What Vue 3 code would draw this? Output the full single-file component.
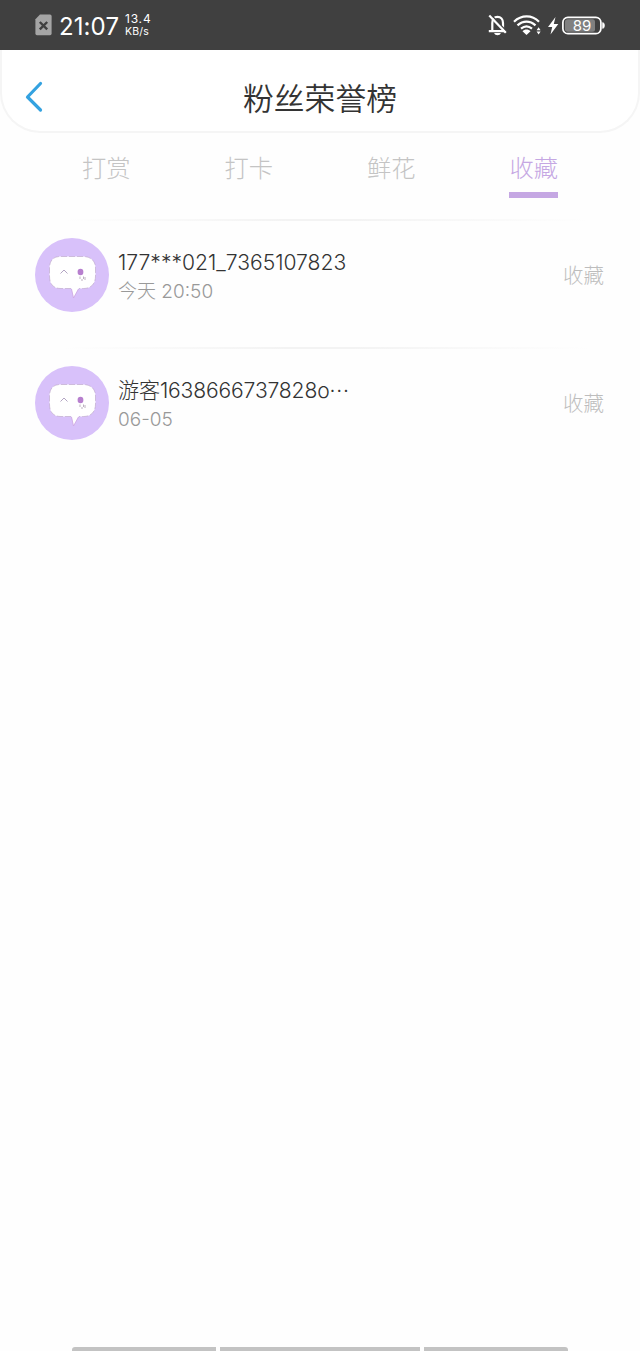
<template>
  <div class="page">
    <div class="status-bar">
      <svg class="sim" width="17" height="22" viewBox="0 0 17 22">
        <path d="M5 0.5H15a1.6 1.6 0 0 1 1.6 1.6V19.6A1.6 1.6 0 0 1 15 21.2H2A1.6 1.6 0 0 1 .4 19.6V5.2Z" fill="#a5a5a5" />
        <path d="M4.8 8l7.4 7.4M12.2 8l-7.4 7.4" stroke="#404040" stroke-width="2.4" />
      </svg>
      <span class="clock">21:07</span>
      <div class="speed">
        <span class="rate">13.4</span>
        <span class="unit">KB/s</span>
      </div>
      <svg class="system" width="120" height="24" viewBox="0 0 120 24">
        <g fill="none" stroke="#fff" stroke-width="2">
          <path d="M4.3 18V10c0-3.7 2-6.200 5.200-6.200s5.500 2.500 5.500 6.200v8M.8 18.200h17.400" stroke-width="2.200" />
          <path d="M3 1.800l16 17" stroke="#404040" stroke-width="1.400" />
          <path d="M1.300 2.500l16.500 17.200" stroke-width="2.200" />
          <path d="M26 8.700c7.500-7 18-7 25 0M29.500 12.400c5.500-5 12.500-5 18 0M33 15.700c3.500-3 7.500-3 11 0" stroke-width="2.200" />
          <rect x="74.900" y="4.300" width="38" height="16.400" rx="5" stroke-width="1.700" />
        </g>
        <path d="M6.200 20h6.600c-.7 3-5.900 3-6.600 0Z" fill="#fff" />
        <path d="M34.500 18.200c2-2.300 6-2.300 8 0l-4 3.700Z" fill="#fff" />
        <path d="M48.600 17.200l2-3 2 3ZM48.600 18.600l2 3 2-3Z" fill="#fff" />
        <path d="M67.500 4L60 14h4.200l-1.700 7.500L70.300 11h-4.500Z" fill="#fff" />
        <rect x="77" y="6.300" width="30" height="12.400" rx="2.500" fill="#808080" />
        <path d="M114.800 9.500c2 1 2 5 0 6Z" fill="#fff" stroke="#fff" />
        <text x="94" y="17.600" text-anchor="middle" class="battery">89</text>
      </svg>
    </div>

    <header class="header">
      <svg class="back" width="20" height="32" viewBox="0 0 20 32">
        <path d="M16.500 2.500L3.500 16l13 13" fill="none" stroke="#34a2e0" stroke-width="3.200" stroke-linecap="round" stroke-linejoin="round" />
      </svg>
      <h1 class="title">粉丝荣誉榜</h1>
    </header>

    <nav class="tabs">
      <div
        class="tab"
        :class="{ active: tab === current }"
        v-for="tab in tabs"
        :key="tab"
        @click="current = tab"
      >
        <span class="tab-label">{{ tab }}</span>
      </div>
    </nav>

    <ul class="fans">
      <li class="fan" v-for="fan in fans" :key="fan.name">
        <svg class="avatar" width="74" height="74" viewBox="0 0 74 74">
          <circle cx="37" cy="37" r="37" fill="#d8c1fa" />
          <path
            d="M25 18.500H48C56 18.500 60.500 23 60.500 30V38C60.500 46 56 50.500 48.500 50.500H43.500L38.500 60L36.500 50.500H26C18 50.500 14.500 46 14.500 38V30C14.500 23 18 18.500 25 18.500Z"
            fill="#fff"
          />
          <path
            d="M36 50.500H26C18 50.500 14.500 46 14.500 38V30C14.500 23 18 18.500 25 18.500H48C56 18.500 60.500 23 60.500 30V38C60.500 46 56 50.500 48.500 50.500H44"
            fill="none"
            stroke="#b9a2c4"
            stroke-width=".6"
            stroke-dasharray="6 2"
          />
          <path d="M36.500 51l2 9 5-9" fill="none" stroke="#cda6df" stroke-width=".8" />
          <path d="M25.500 35.500l3.500-3.500 3.500 3.500" fill="none" stroke="#b3a5c3" />
          <ellipse cx="45.500" cy="34" rx="2.900" ry="3.300" fill="#b77fce" />
          <path d="M45 38.500v2.500M48.500 38.500v2.500M46 42h2M50 39v3" stroke="#b5a9b9" stroke-width=".9" />
        </svg>
        <div class="info">
          <div class="name">{{ fan.name }}<span class="more" v-if="fan.cut">···</span></div>
          <div class="time">{{ fan.time }}</div>
        </div>
        <span class="action">收藏</span>
      </li>
    </ul>

    <div class="nav-hints">
      <i class="hint side"></i>
      <i class="hint"></i>
      <i class="hint side"></i>
    </div>
  </div>
</template>

<script setup>
import { ref } from "vue";

const tabs = ["打赏", "打卡", "鲜花", "收藏"];
const current = ref("收藏");

const fans = [
  { name: "177***021_7365107823", time: "今天 20:50" },
  { name: "游客1638666737828o", time: "06-05", cut: true },
];
</script>

<style>
body {
  margin: 0;
  background: #fefefe;
}
</style>

<style scoped>
.page {
  height: 1351px;
  display: flex;
  flex-direction: column;
  overflow: hidden;
  font-family: Inter, "Noto Sans CJK SC", sans-serif;
  font-weight: 300;
  background: #fefefe;
}

.status-bar {
  box-sizing: border-box;
  height: 50px;
  flex: none;
  display: flex;
  align-items: center;
  padding: 0 32px 0 35px;
  color: #fff;
  background: #404040;
}

.clock {
  margin-left: 7px;
  width: 60px;
  font-size: 24px;
  font-weight: 400;
  line-height: 30px;
  letter-spacing: 0.1px;
  padding-top: 3px;
}

.speed {
  display: flex;
  flex-direction: column;
  margin-left: 6px;
  padding-top: 1px;
  font-weight: 400;
}

.rate {
  font-size: 12px;
  line-height: 12px;
  letter-spacing: 0.8px;
}

.unit {
  font-size: 10.5px;
  line-height: 13px;
  letter-spacing: 0.2px;
}

.system {
  margin-left: auto;
}

.battery {
  font-size: 15px;
  font-weight: 400;
  fill: #fff;
}

.header {
  box-sizing: border-box;
  height: 83px;
  flex: none;
  display: flex;
  align-items: center;
  padding: 12px 22px 0;
  border: 2px solid #f5f5f5;
  border-top: 0;
  border-radius: 0 0 40px 40px;
  background: #fff;
}

.title {
  flex: 1;
  margin: 0 20px 0 0;
  padding-top: 5px;
  font-size: 30.8px;
  font-weight: 350;
  line-height: 40px;
  text-align: center;
  color: #333;
}

.tabs {
  display: grid;
  grid-template-columns: repeat(4, 1fr);
  height: 86px;
  flex: none;
  padding: 0 35px;
}

.tab {
  display: flex;
  justify-content: center;
  align-items: flex-start;
  padding-top: 17px;
  color: #c4c4c4;
  cursor: pointer;
}

.tab-label {
  box-sizing: border-box;
  height: 48px;
  padding-top: 1px;
  font-size: 24.3px;
  line-height: 35px;
  border-bottom: 6px solid transparent;
}

.active {
  color: #c5a7e3;
}

.active .tab-label {
  border-color: #c5a7e3;
}

.fans {
  flex: 1;
  margin: 0;
  padding: 0;
  list-style: none;
}

.fan {
  box-sizing: border-box;
  height: 128px;
  display: flex;
  align-items: flex-start;
  padding: 19px 36px 0 35px;
  background: linear-gradient(90deg, transparent 10%, #f3f3f3 45%, #f3f3f3 55%, transparent 92%) top / 100% 2px no-repeat;
}

.info {
  flex: 1;
  margin-left: 9px;
  padding-top: 10px;
}

.name {
  height: 30px;
  font-size: 21.1px;
  line-height: 30px;
  color: #333;
}

.fan:last-child .name {
  letter-spacing: -0.15px;
}

.name .more {
  letter-spacing: 0.8px;
}

.time {
  height: 28px;
  font-size: 19px;
  line-height: 28px;
  color: #999;
}

.action {
  font-size: 20.5px;
  line-height: 76px;
  color: #bdbdbd;
}

.nav-hints {
  display: flex;
  justify-content: center;
  gap: 4px;
}

.hint {
  width: 200px;
  height: 4px;
  background: #c3c3c3;
}

.side {
  width: 144px;
}

.side:first-child {
  border-radius: 3px 0 0 0;
}

.side:last-child {
  border-radius: 0 3px 0 0;
}
</style>
